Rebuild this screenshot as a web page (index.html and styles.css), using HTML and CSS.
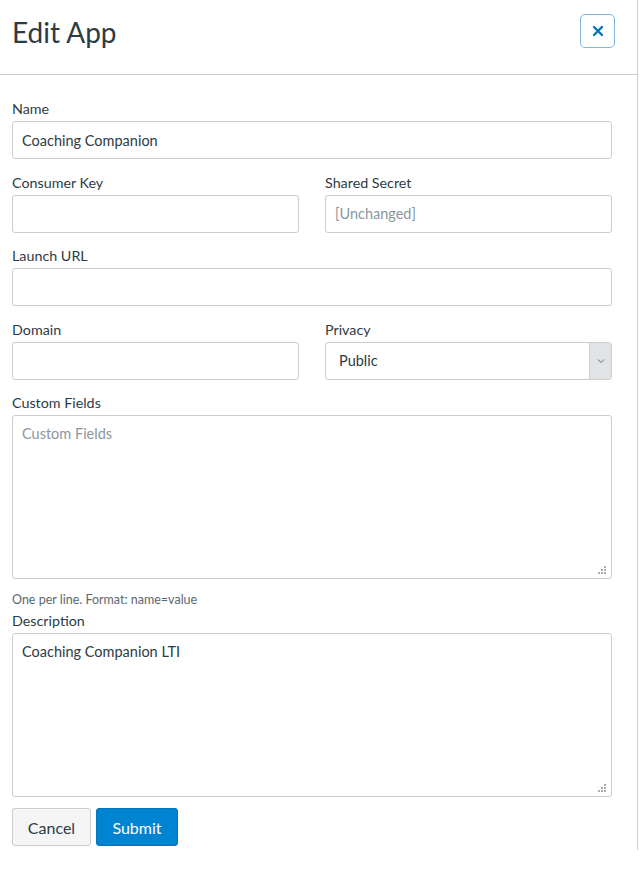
FILE: index.html
```html
<!DOCTYPE html>
<html lang="en">
<head>
<meta charset="utf-8">
<title>Edit App</title>
<link rel="stylesheet" href="styles.css">
</head>
<body>
<div class="modal">
  <header class="modal-header">
    <h1 class="title">Edit App</h1>
    <button class="close" type="button" aria-label="Close">
      <svg width="12" height="12" viewBox="0 0 12 12"><path d="M2 2 L10 10 M10 2 L2 10" stroke="#0374b5" stroke-width="2.4" stroke-linecap="round" fill="none"/></svg>
    </button>
  </header>
  <form class="modal-body">
    <div class="field">
      <label class="label">Name</label>
      <div class="input">Coaching Companion</div>
    </div>
    <div class="row">
      <div class="field">
        <label class="label">Consumer Key</label>
        <div class="input"></div>
      </div>
      <div class="field">
        <label class="label">Shared Secret</label>
        <div class="input placeholder">[Unchanged]</div>
      </div>
    </div>
    <div class="field">
      <label class="label">Launch URL</label>
      <div class="input"></div>
    </div>
    <div class="row">
      <div class="field">
        <label class="label">Domain</label>
        <div class="input"></div>
      </div>
      <div class="field">
        <label class="label">Privacy</label>
        <div class="select">
          <span class="select-value">Public</span>
          <span class="select-arrow">
            <svg width="8" height="6" viewBox="0 0 8 6"><path d="M1 1.5 L4 4.5 L7 1.5" stroke="#5b6770" stroke-width="1" fill="none"/></svg>
          </span>
        </div>
      </div>
    </div>
    <div class="field tight">
      <label class="label">Custom Fields</label>
      <div class="textarea placeholder">Custom Fields<span class="grip"><svg width="10" height="10" viewBox="0 0 10 10"><g fill="#a7adb2"><rect x="7" y="1" width="2" height="2"/><rect x="7" y="4" width="2" height="2"/><rect x="4" y="4" width="2" height="2"/><rect x="7" y="7" width="2" height="2"/><rect x="4" y="7" width="2" height="2"/><rect x="1" y="7" width="2" height="2"/></g></svg></span></div>
    </div>
    <p class="help">One per line. Format: name=value</p>
    <div class="field last">
      <label class="label">Description</label>
      <div class="textarea">Coaching Companion LTI<span class="grip"><svg width="10" height="10" viewBox="0 0 10 10"><g fill="#a7adb2"><rect x="7" y="1" width="2" height="2"/><rect x="7" y="4" width="2" height="2"/><rect x="4" y="4" width="2" height="2"/><rect x="7" y="7" width="2" height="2"/><rect x="4" y="7" width="2" height="2"/><rect x="1" y="7" width="2" height="2"/></g></svg></span></div>
    </div>
    <div class="actions">
      <button class="btn btn-cancel" type="button">Cancel</button>
      <button class="btn btn-submit" type="button">Submit</button>
    </div>
  </form>
</div>
</body>
</html>
```

FILE: styles.css
```css
* { box-sizing: border-box; }
html, body { margin: 0; padding: 0; background: #fff; }
body {
  font-family: Lato, "Open Sans", "Liberation Sans", sans-serif;
  color: #2d3b45;
}
.modal {
  width: 638px;
  height: 850px;
  border-right: 1px solid #c7cdd1;
}
.modal-header {
  height: 75px;
  border-bottom: 1px solid #c7cdd1;
  display: flex;
  justify-content: space-between;
  align-items: flex-start;
  padding: 14px 22px 0 12px;
}
.title {
  margin: 1px 0 0;
  font-size: 28px;
  line-height: 34px;
  font-weight: 400;
  color: #2d3b45;
}
.close {
  width: 35px;
  height: 34px;
  border: 1px solid #7fb4dc;
  border-radius: 5px;
  background: #fff;
  display: flex;
  align-items: center;
  justify-content: center;
  padding: 0;
}
.modal-body {
  padding: 24px 25px 0 12px;
  display: flex;
  flex-direction: column;
}
.row {
  display: grid;
  grid-template-columns: 1fr 1fr;
  column-gap: 26px;
}
.field {
  display: flex;
  flex-direction: column;
  margin-bottom: 13.5px;
}
.field.tight { margin-bottom: 0; }
.field.last { margin-bottom: 11px; }
.label {
  font-size: 14.3px;
  line-height: 20px;
  margin-bottom: 2px;
  color: #2d3b45;
}
.input, .select, .textarea {
  height: 38px;
  border: 1px solid #c7cdd1;
  border-radius: 3px;
  background: #fff;
  font-size: 14.5px;
  color: #2d3b45;
  padding: 0 9px;
  display: flex;
  align-items: center;
}
.placeholder { color: #8b969e; }
.select {
  padding: 0 0 0 13px;
  justify-content: space-between;
  align-items: stretch;
}
.select-value { display: flex; align-items: center; }
.select-arrow {
  width: 22px;
  background: #e2e3e4;
  border-left: 1px solid #c7cdd1;
  display: flex;
  align-items: center;
  justify-content: center;
  border-radius: 0 2px 2px 0;
}
.textarea {
  height: 164px;
  align-items: flex-start;
  padding-top: 9px;
  line-height: 18px;
  position: relative;
}
.grip {
  position: absolute;
  right: 4px;
  bottom: 3px;
  width: 10px;
  height: 10px;
  display: block;
  line-height: 0;
}
.help {
  margin: 12px 0 2px;
  font-size: 12.5px;
  line-height: 18px;
  color: #5b6770;
}
.actions {
  display: flex;
  gap: 5px;
}
.btn {
  height: 38px;
  border-radius: 3px;
  font-family: Lato, "Open Sans", "Liberation Sans", sans-serif;
  font-size: 16px;
  padding: 0 14px;
  border: 1px solid #c7cdd1;
}
.btn-cancel {
  width: 79px;
  background: #f5f5f5;
  color: #2d3b45;
}
.btn-submit {
  width: 82px;
  background: #0084d1;
  border-color: #0077bd;
  color: #fff;
}
```
